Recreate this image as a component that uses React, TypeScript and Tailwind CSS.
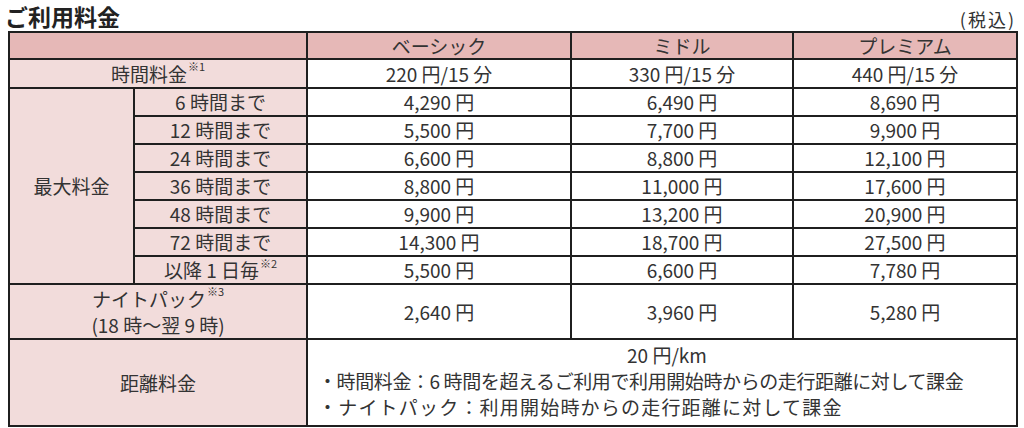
import React from 'react';

const font = { fontFamily: '"Noto Sans CJK JP", "Noto Sans", sans-serif' };

type PriceRow = { label: React.ReactNode; values: string[] };

const Note = ({ n }: { n: number }) => (
  <sup className="text-[11px] leading-none align-[5px] ml-[1px]">※{n}</sup>
);

const maxRows: PriceRow[] = [
  { label: '6 時間まで', values: ['4,290 円', '6,490 円', '8,690 円'] },
  { label: '12 時間まで', values: ['5,500 円', '7,700 円', '9,900 円'] },
  { label: '24 時間まで', values: ['6,600 円', '8,800 円', '12,100 円'] },
  { label: '36 時間まで', values: ['8,800 円', '11,000 円', '17,600 円'] },
  { label: '48 時間まで', values: ['9,900 円', '13,200 円', '20,900 円'] },
  { label: '72 時間まで', values: ['14,300 円', '18,700 円', '27,500 円'] },
  {
    label: (
      <>
        以降 1 日毎<Note n={2} />
      </>
    ),
    values: ['5,500 円', '6,600 円', '7,780 円'],
  },
];

const cell = 'border-2 border-[#1f1f1f] text-center align-middle p-0';
const label = `${cell} bg-[#f2dcdb]`;

export default function App() {
  return (
    <div className="w-[1024px] h-[428px] bg-white text-[#333] overflow-hidden" style={font}>
      <div className="flex justify-between items-end pl-[5px] pr-[8px] h-[31px]">
        <h2 className="text-[23px] font-bold text-[#222] leading-none pb-[3px]">ご利用料金</h2>
        <span className="text-[18px] tracking-[2px] leading-none pb-[3px]">(税込)</span>
      </div>
      <table className="ml-[8px] w-[1008px] border-collapse table-fixed text-[19px] leading-tight">
        <colgroup>
          <col className="w-[125px]" />
          <col className="w-[173px]" />
          <col className="w-[264px]" />
          <col className="w-[222px]" />
          <col className="w-[224px]" />
        </colgroup>
        <tbody>
          <tr className="h-[27px] bg-[#e6b8b7]">
            <td colSpan={2} className={cell}></td>
            <td className={cell}>ベーシック</td>
            <td className={cell}>ミドル</td>
            <td className={cell}>プレミアム</td>
          </tr>
          <tr className="h-[29px]">
            <td colSpan={2} className={label}>
              時間料金<Note n={1} />
            </td>
            <td className={cell}>220 円/15 分</td>
            <td className={cell}>330 円/15 分</td>
            <td className={cell}>440 円/15 分</td>
          </tr>
          {maxRows.map((r, i) => (
            <tr key={i} className="h-[28px]">
              {i === 0 && (
                <td rowSpan={7} className={label}>
                  最大料金
                </td>
              )}
              <td className={label}>{r.label}</td>
              {r.values.map((v) => (
                <td key={v} className={cell}>
                  {v}
                </td>
              ))}
            </tr>
          ))}
          <tr className="h-[55px]">
            <td colSpan={2} className={`${label} leading-[26px]`}>
              ナイトパック<Note n={3} />
              <br />
              (18 時～翌 9 時)
            </td>
            <td className={cell}>2,640 円</td>
            <td className={cell}>3,960 円</td>
            <td className={cell}>5,280 円</td>
          </tr>
          <tr className="h-[87px]">
            <td colSpan={2} className={label}>
              距離料金
            </td>
            <td colSpan={3} className={`${cell} text-left pl-[10px] pb-[4px] leading-[26px]`}>
              <div className="text-center">20 円/km</div>
              <div className="tracking-[-0.4px]">
                ・時間料金：6 時間を超えるご利用で利用開始時からの走行距離に対して課金
              </div>
              <div className="tracking-[1.2px]">・ナイトパック：利用開始時からの走行距離に対して課金</div>
            </td>
          </tr>
        </tbody>
      </table>
    </div>
  );
}
